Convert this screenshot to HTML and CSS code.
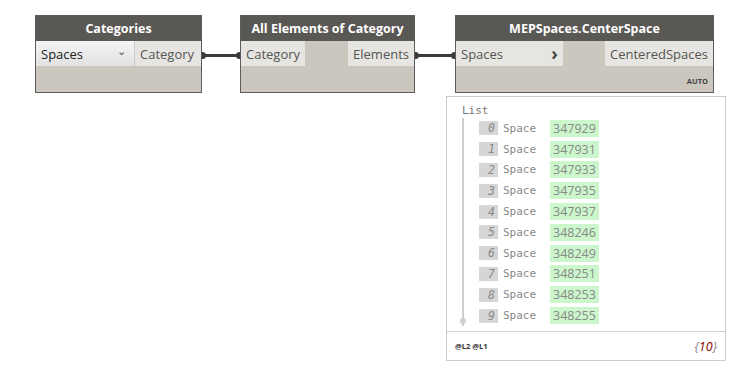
FILE: index.html
```html
<!DOCTYPE html>
<html lang="en">
<head>
    <meta charset="UTF-8">
    <title>Dynamo Graph</title>
    <link rel="stylesheet" href="styles.css">
</head>
<body>
    <div class="canvas">
        <div class="node node-categories">
            <div class="node-header">Categories</div>
            <div class="node-ports">
                <div class="dropdown">Spaces<span class="caret">&#8964;</span></div>
                <div class="port port-out">Category</div>
            </div>
            <div class="node-footer"></div>
        </div>

        <div class="wire"><span class="knob knob-left"></span><span class="knob knob-right"></span></div>

        <div class="node node-elements">
            <div class="node-header">All Elements of Category</div>
            <div class="node-ports">
                <div class="port port-in">Category</div>
                <div class="port port-out">Elements</div>
            </div>
            <div class="node-footer"></div>
        </div>

        <div class="wire wire-long"><span class="knob knob-left"></span><span class="knob knob-right"></span></div>

        <div class="column">
            <div class="node node-center">
                <div class="node-header">MEPSpaces.CenterSpace</div>
                <div class="node-ports">
                    <div class="port port-in port-lacing">Spaces<span class="chevron">&#8250;</span></div>
                    <div class="port port-out">CenteredSpaces</div>
                </div>
                <div class="node-footer"><span class="auto">AUTO</span></div>
            </div>

            <div class="preview">
                <div class="preview-body">
                    <div class="list-title">List</div>
                    <div class="list-tree">
                        <div class="item"><span class="idx">0</span><span class="type">Space</span><span class="val">347929</span></div>
                        <div class="item"><span class="idx">1</span><span class="type">Space</span><span class="val">347931</span></div>
                        <div class="item"><span class="idx">2</span><span class="type">Space</span><span class="val">347933</span></div>
                        <div class="item"><span class="idx">3</span><span class="type">Space</span><span class="val">347935</span></div>
                        <div class="item"><span class="idx">4</span><span class="type">Space</span><span class="val">347937</span></div>
                        <div class="item"><span class="idx">5</span><span class="type">Space</span><span class="val">348246</span></div>
                        <div class="item"><span class="idx">6</span><span class="type">Space</span><span class="val">348249</span></div>
                        <div class="item"><span class="idx">7</span><span class="type">Space</span><span class="val">348251</span></div>
                        <div class="item"><span class="idx">8</span><span class="type">Space</span><span class="val">348253</span></div>
                        <div class="item"><span class="idx">9</span><span class="type">Space</span><span class="val">348255</span></div>
                    </div>
                </div>
                <div class="preview-footer">
                    <span class="levels">@L2 @L1</span>
                    <span class="count">{<em>10</em>}</span>
                </div>
            </div>
        </div>
    </div>
</body>
</html>
```

FILE: styles.css
```css
body {
    margin: 0;
    background-color: #ffffff;
    font-family: "Open Sans", "Noto Sans", sans-serif;
}
.canvas {
    display: flex;
    align-items: flex-start;
    padding: 15px 0 0 35px;
}
.node {
    border: 1px solid #5c5c5c;
    background-color: #cbc7bf;
    box-sizing: border-box;
    height: 78px;
    display: flex;
    flex-direction: column;
}
.node-categories { width: 167px; }
.node-elements { width: 175px; }
.node-center { width: 259px; }
.node-header {
    height: 25px;
    background-color: #5a5855;
    color: #ffffff;
    font-weight: bold;
    font-size: 12.5px;
    line-height: 25px;
    text-align: center;
    white-space: nowrap;
}
.node-ports {
    height: 25px;
    display: flex;
    justify-content: space-between;
}
.port {
    background-color: #e6e5e1;
    color: #555555;
    font-size: 13px;
    line-height: 23px;
    padding: 2px 5px 0;
    white-space: nowrap;
}
.node-categories .port-out {
    flex: 1;
    border-left: 1px solid #cfcbc4;
}
.dropdown {
    width: 98px;
    box-sizing: border-box;
    padding: 2px 5px 0;
    background: linear-gradient(#f4f4f4, #e2e2e2);
    color: #222222;
    font-size: 13px;
    line-height: 23px;
    display: flex;
    justify-content: space-between;
}
.caret {
    color: #555555;
    font-size: 11px;
    line-height: 16px;
    margin-right: 3px;
}
.port-lacing {
    width: 107px;
    box-sizing: border-box;
    display: flex;
    justify-content: space-between;
}
.chevron {
    font-weight: bold;
    font-size: 18px;
    color: #444444;
    line-height: 20px;
}
.node-footer {
    flex: 1;
    display: flex;
    justify-content: flex-end;
    align-items: center;
    padding-right: 5px;
}
.auto {
    font-size: 7.5px;
    font-weight: bold;
    color: #444444;
    margin-top: 4px;
}
.wire {
    width: 38px;
    height: 3px;
    margin-top: 39px;
    background-color: #3a3a3a;
    position: relative;
}
.wire-long { width: 40px; }
.knob {
    position: absolute;
    top: -2px;
    width: 4px;
    height: 7px;
    background-color: #3a3a3a;
}
.knob-left {
    left: 0;
    border-radius: 0 4px 4px 0;
}
.knob-right {
    right: 0;
    border-radius: 4px 0 0 4px;
}
.column {
    display: flex;
    flex-direction: column;
}
.preview {
    margin: 3px 0 0 -9px;
    width: 280px;
    height: 265px;
    box-sizing: border-box;
    border: 1px solid #cccccc;
    display: flex;
    flex-direction: column;
    font-family: "DejaVu Sans Mono", "Liberation Mono", monospace;
}
.preview-body {
    flex: 1;
    padding: 7px 0 0 15px;
}
.list-title {
    font-size: 11px;
    color: #777777;
    line-height: 14px;
}
.list-tree {
    border-left: 2px solid #cfcfcf;
    padding: 0 0 0 15px;
    position: relative;
}
.list-tree::after {
    content: "";
    position: absolute;
    left: -4px;
    bottom: 2px;
    width: 6px;
    height: 6px;
    border-radius: 50%;
    background-color: #cfcfcf;
}
.item {
    display: flex;
    align-items: center;
    height: 20.8px;
}
.idx {
    width: 19px;
    height: 14px;
    background-color: #d6d6d6;
    color: #888888;
    font-style: italic;
    font-size: 11.5px;
    line-height: 14px;
    text-align: right;
    padding-right: 3px;
    box-sizing: border-box;
}
.type {
    width: 47px;
    padding-left: 5px;
    color: #888888;
    font-size: 11px;
}
.val {
    background-color: #ccf7cc;
    color: #888888;
    font-family: "Open Sans", sans-serif;
    font-size: 12.5px;
    line-height: 17px;
    padding: 0 3px;
}
.preview-footer {
    height: 28px;
    flex-shrink: 0;
    border-top: 1px solid #d0d0d0;
    display: flex;
    justify-content: space-between;
    align-items: center;
    padding: 0 8px;
}
.levels {
    font-family: "Open Sans", sans-serif;
    font-size: 7.5px;
    font-weight: bold;
    color: #333333;
}
.count {
    font-family: "Open Sans", sans-serif;
    font-style: italic;
    font-size: 12.5px;
    color: #888888;
}
.count em {
    color: #8b0000;
}
```
